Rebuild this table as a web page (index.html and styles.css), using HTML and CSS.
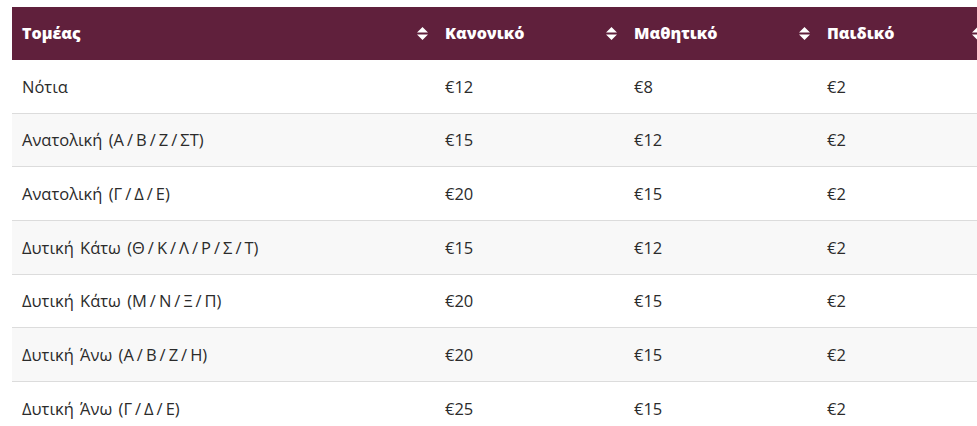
FILE: index.html
```html
<!DOCTYPE html>
<html lang="el">
<head>
<meta charset="utf-8">
<title>Τιμές</title>
<link rel="stylesheet" href="styles.css">
</head>
<body>
<div class="wrap">
<table class="prices">
  <colgroup>
    <col class="c1"><col class="c2"><col class="c3"><col class="c4">
  </colgroup>
  <thead>
    <tr>
      <th><span class="th-in"><span>Τομέας</span><svg class="sort" viewBox="0 0 11 13"><path d="M5.5 0 L11 5.5 L0 5.5 Z M0 7.5 L11 7.5 L5.5 13 Z"/></svg></span></th>
      <th><span class="th-in"><span>Κανονικό</span><svg class="sort" viewBox="0 0 11 13"><path d="M5.5 0 L11 5.5 L0 5.5 Z M0 7.5 L11 7.5 L5.5 13 Z"/></svg></span></th>
      <th><span class="th-in"><span>Μαθητικό</span><svg class="sort" viewBox="0 0 11 13"><path d="M5.5 0 L11 5.5 L0 5.5 Z M0 7.5 L11 7.5 L5.5 13 Z"/></svg></span></th>
      <th><span class="th-in"><span>Παιδικό</span><svg class="sort" viewBox="0 0 11 13"><path d="M5.5 0 L11 5.5 L0 5.5 Z M0 7.5 L11 7.5 L5.5 13 Z"/></svg></span></th>
    </tr>
  </thead>
  <tbody>
    <tr><td>Νότια</td><td>€12</td><td>€8</td><td>€2</td></tr>
    <tr><td>Ανατολική (Α<span class="sl">/</span>Β<span class="sl">/</span>Ζ<span class="sl">/</span>ΣΤ)</td><td>€15</td><td>€12</td><td>€2</td></tr>
    <tr><td>Ανατολική (Γ<span class="sl">/</span>Δ<span class="sl">/</span>Ε)</td><td>€20</td><td>€15</td><td>€2</td></tr>
    <tr><td>Δυτική Κάτω (Θ<span class="sl">/</span>Κ<span class="sl">/</span>Λ<span class="sl">/</span>Ρ<span class="sl">/</span>Σ<span class="sl">/</span>Τ)</td><td>€15</td><td>€12</td><td>€2</td></tr>
    <tr><td>Δυτική Κάτω (Μ<span class="sl">/</span>Ν<span class="sl">/</span>Ξ<span class="sl">/</span>Π)</td><td>€20</td><td>€15</td><td>€2</td></tr>
    <tr><td>Δυτική Άνω (Α<span class="sl">/</span>Β<span class="sl">/</span>Ζ<span class="sl">/</span>Η)</td><td>€20</td><td>€15</td><td>€2</td></tr>
    <tr><td>Δυτική Άνω (Γ<span class="sl">/</span>Δ<span class="sl">/</span>Ε)</td><td>€25</td><td>€15</td><td>€2</td></tr>
  </tbody>
</table>
</div>
</body>
</html>
```
FILE: styles.css
```css
html, body {
  margin: 0;
  padding: 0;
  background: #fff;
  overflow: hidden;
}
.wrap {
  padding: 7px 0 0 12px;
  width: 990px;
}
.prices {
  border-collapse: collapse;
  table-layout: fixed;
  width: 978px;
  font-family: "Open Sans", "Noto Sans", sans-serif;
  font-size: 16px;
  color: #2b2b2b;
}
.c1 { width: 423px; }
.c2 { width: 189px; }
.c3 { width: 193px; }
.c4 { width: 173px; }
.prices th {
  background: #60203c;
  color: #fff;
  font-weight: 800;
  text-align: left;
  height: 52.5px;
  padding: 0 10px;
  box-sizing: border-box;
}
.th-in {
  display: flex;
  align-items: center;
  justify-content: space-between;
}
.sort {
  width: 11px;
  height: 13px;
  fill: #fff;
  margin-right: -3px;
}
.prices td {
  height: 53.67px;
  padding: 0 10px;
  box-sizing: border-box;
  border-bottom: 1px solid #dcdcdc;
  vertical-align: middle;
  font-size: 16.5px;
  word-spacing: 2px;
}
.sl {
  margin: 0 3px;
}
.prices tbody tr:nth-child(even) td {
  background: #f8f8f8;
}
.prices tbody tr:last-child td {
  border-bottom: none;
}
```
